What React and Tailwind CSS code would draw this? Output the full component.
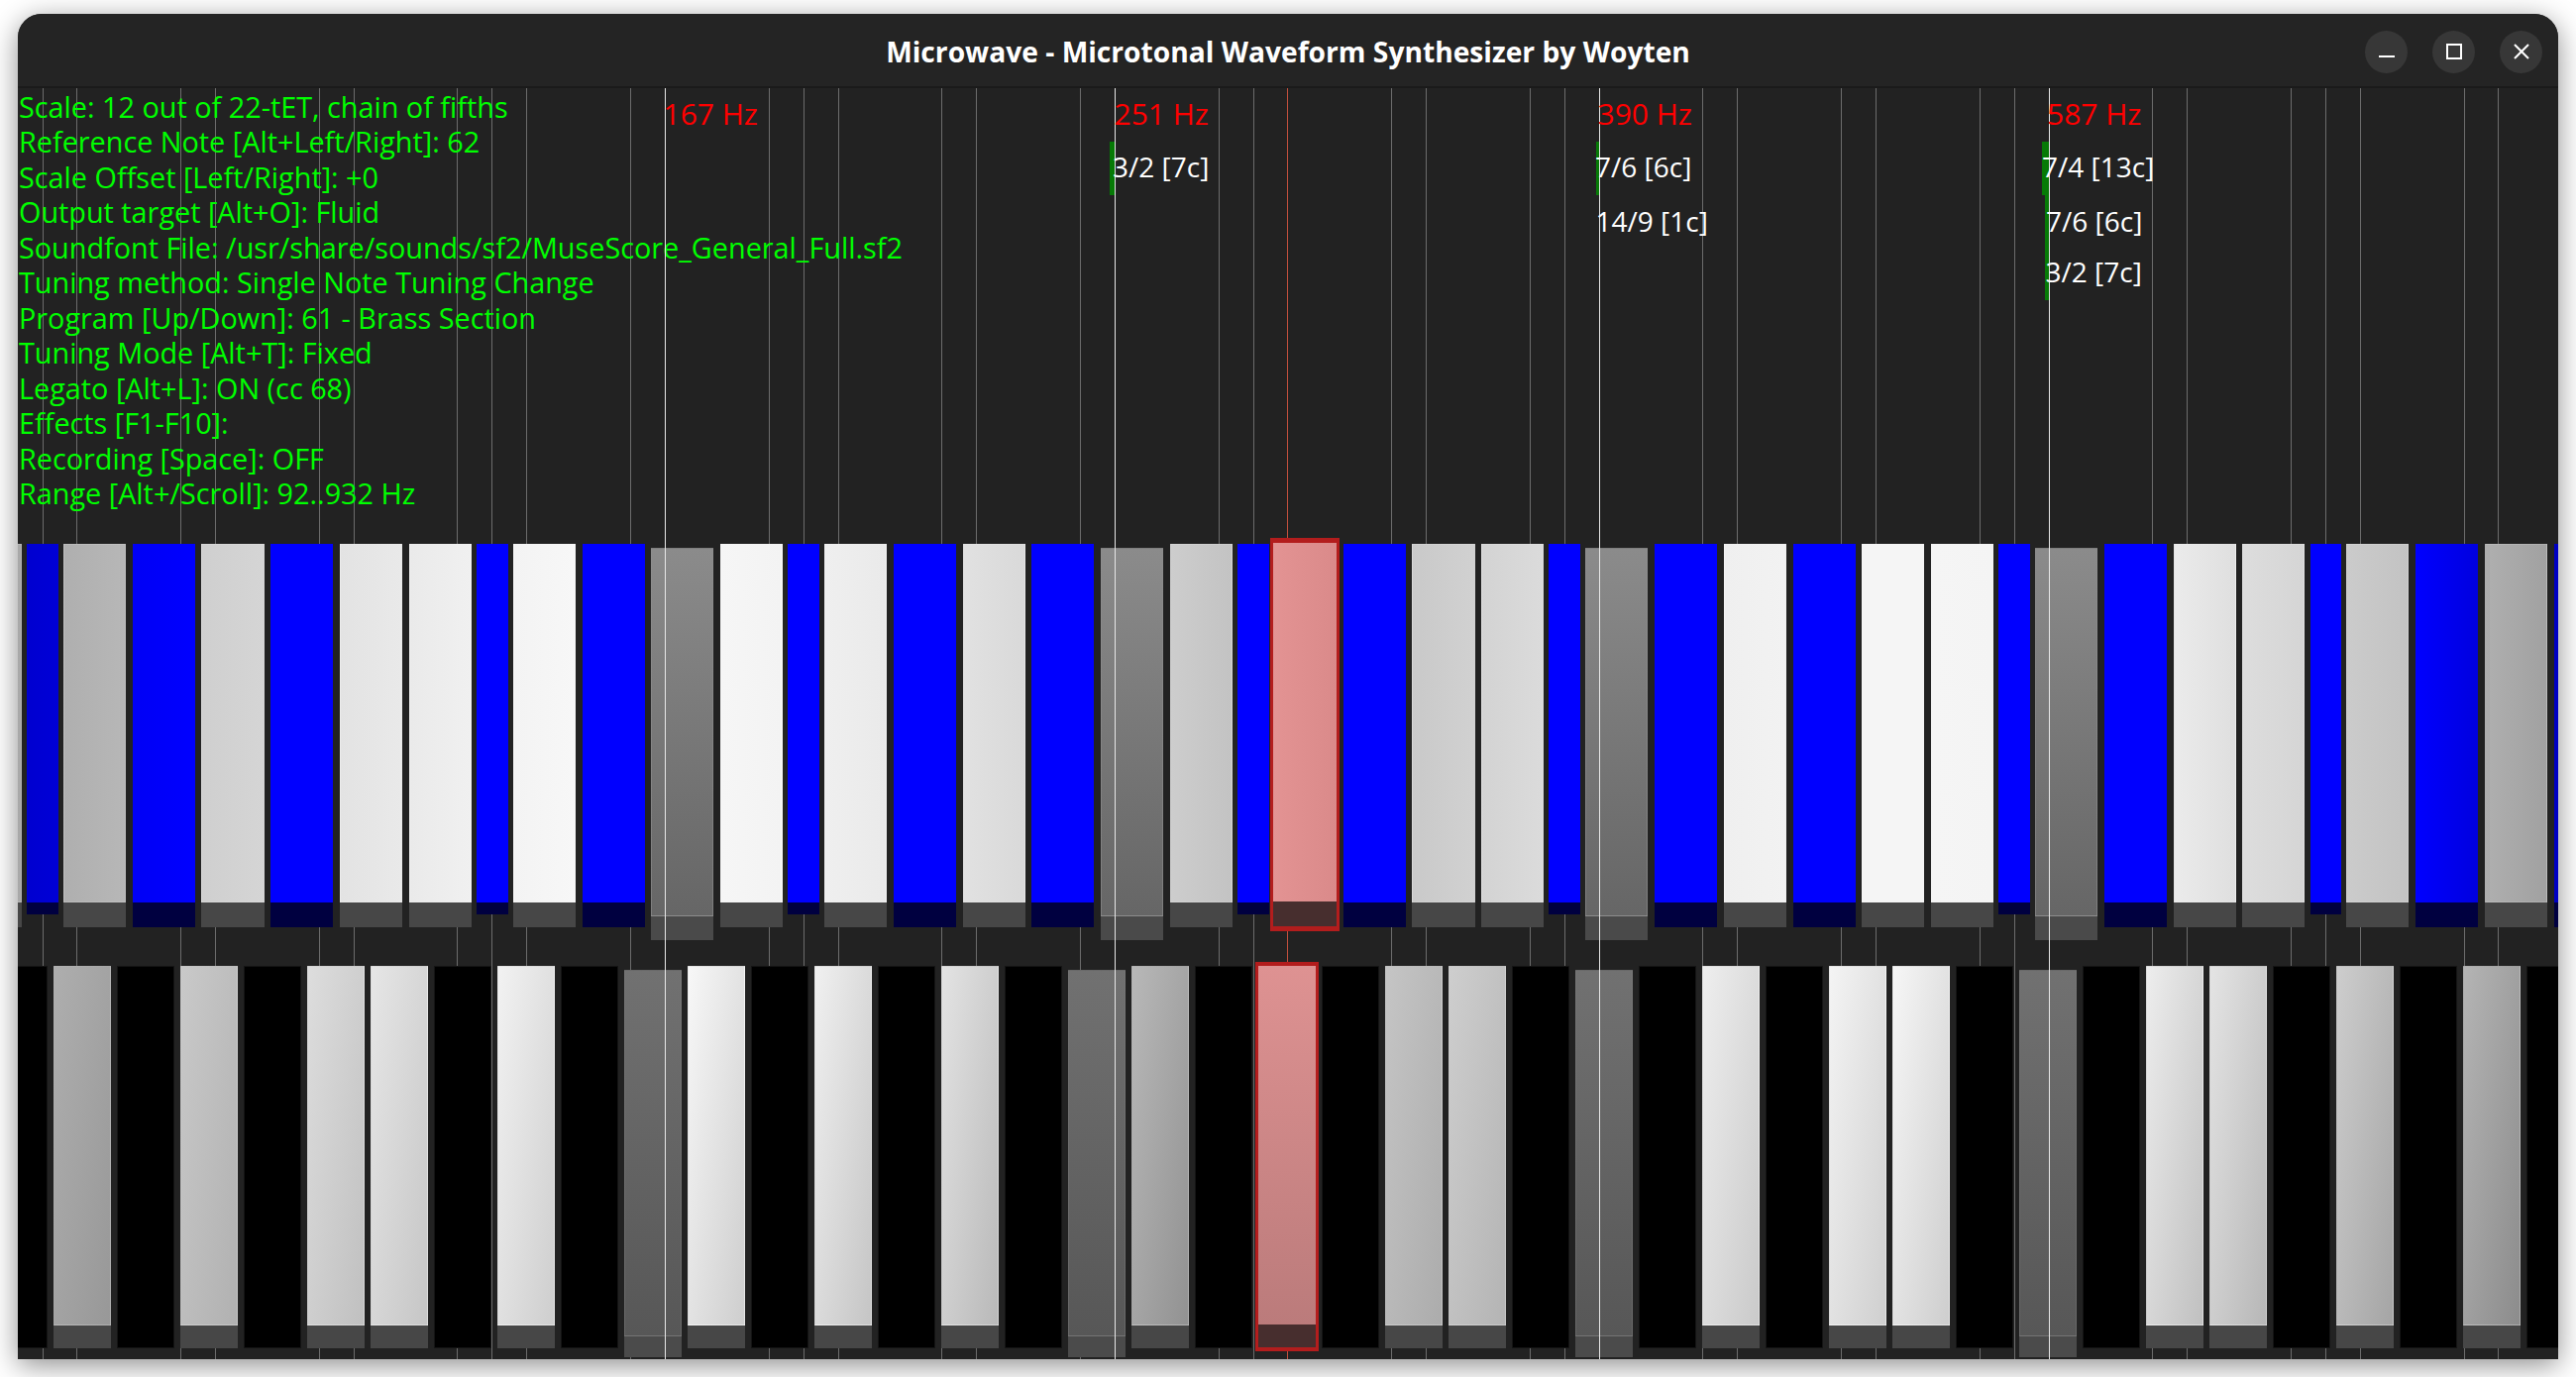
import React from "react";

// geometry of the tuning canvas, in px
const STEP = 34.915; // one step of 22-tET
const ORIGIN = 25; // x of step 0 inside the canvas
const PITCH = 64.01; // lower keyboard: 12 keys per 22 steps

// grey level of the keys along the keyboard (step -> value)
const CURVE = [
  [-4, 156], [0, 172], [2.5, 184], [4.5, 206], [6.5, 214], [8.5, 226], [10.5, 234],
  [12.5, 240], [15.5, 247], [18, 248], [21, 244], [25, 232], [29, 214], [32.5, 206],
  [34.5, 194], [36.5, 188], [39.5, 200], [41.5, 210], [43.5, 220], [48, 238], [53, 246],
  [57, 244], [61.5, 236], [63.5, 222], [65.5, 212], [66.5, 204], [68.5, 194], [70.5, 176],
  [72.5, 160], [76, 148],
];

function level(k) {
  for (let i = 1; i < CURVE.length; i++) {
    const [k0, v0] = CURVE[i - 1];
    const [k1, v1] = CURVE[i];
    if (k <= k1) return Math.round(v0 + ((v1 - v0) * (k - k0)) / (k1 - k0));
  }
  return CURVE[CURVE.length - 1][1];
}

const grey = (v) => `rgb(${v},${v},${v})`;
const blue = (v) => `rgb(0,0,${Math.max(195, Math.min(255, Math.round(255 - (190 - v) * 2.5)))})`;

const INFO = [
  "Scale: 12 out of 22-tET, chain of fifths",
  "Reference Note [Alt+Left/Right]: 62",
  "Scale Offset [Left/Right]: +0",
  "Output target [Alt+O]: Fluid",
  "Soundfont File: /usr/share/sounds/sf2/MuseScore_General_Full.sf2",
  "Tuning method: Single Note Tuning Change",
  "Program [Up/Down]: 61 - Brass Section",
  "Tuning Mode [Alt+T]: Fixed",
  "Legato [Alt+L]: ON (cc 68)",
  "Effects [F1-F10]:",
  "Recording [Space]: OFF",
  "Range [Alt+/Scroll]: 92..932 Hz",
];

const UPPER_SPEC =
  "L2 B1 L2 B2 L2 B2 L2 L2 B1 L2 B2 D2 L2 B1 L2 B2 L2 B2 D2 L2 B1 R2 B2 L2 L2 B1 D2 B2 L2 B2 L2 L2 B1 D2 B2 L2 L2 B1 L2 B2 L2 B2";
const LOWER_SPEC =
  "K L K L K L L K L K D L K L K L K D L K R K L L K D K L K L L K D K L L K L K L K";

let cursor = -2.5;
const upperKeys = UPPER_SPEC.split(" ").map((t) => {
  const key = { kind: t[0], span: Number(t[1]), at: cursor };
  cursor += key.span;
  return key;
});

// the key just below the pressed one is shaded darker on screen
const LOWER_TONES = { 18: [184, 146] };

const lowerKeys = LOWER_SPEC.split(" ").map((kind, i) => ({
  kind,
  center: 36 + ((i - 20) * 22) / 12,
  tone: LOWER_TONES[i],
}));

const NOTES = [0, 1, 4, 5, 8, 9, 12, 13, 14, 17, 18, 21];
const MARKED = [18, 31, 45, 58];
const PRESSED = 36;
const gridSteps = [0, 1, 2, 3]
  .flatMap((p) => NOTES.map((n) => n + p * 22))
  .filter((k) => k <= 73 && !MARKED.includes(k) && k !== PRESSED);

const xOf = (k) => ORIGIN + STEP * k;

const HZ = [
  { text: "167 Hz", left: 651.5 },
  { text: "251 Hz", left: 1106.5 },
  { text: "390 Hz", left: 1594.5 },
  { text: "587 Hz", left: 2048 },
];

const RATIOS = [
  { text: "3/2 [7c]", left: 1105, top: 64.5 },
  { text: "7/6 [6c]", left: 1592, top: 64.5 },
  { text: "14/9 [1c]", left: 1592.5, top: 119.5 },
  { text: "7/4 [13c]", left: 2043, top: 64.5 },
  { text: "7/6 [6c]", left: 2047, top: 119.5 },
  { text: "3/2 [7c]", left: 2046.5, top: 170.5 },
];

// deviation bars, drawn left of the marker line
const BARS = [
  { left: 1102.4, top: 53.7, width: 5, height: 54 },
  { left: 1593.2, top: 53.7, width: 3, height: 54 },
  { left: 2042.5, top: 53.7, width: 7.6, height: 54 },
  { left: 2045.7, top: 107.7, width: 4.4, height: 106 },
];

function UpperKey({ kind, span, at }) {
  if (kind === "R") {
    return (
      <div className="w-[69.83px] shrink-0 border-x-[3.4px] border-y-[5px] border-[#b31d1d]">
        <div className="h-[362px] bg-linear-to-r from-[#e39393] to-[#da8a8a]" />
        <div className="h-[25px] bg-[#472e2e]" />
      </div>
    );
  }
  if (kind === "D") {
    return (
      <div className="w-[69.83px] shrink-0 px-[3.4px] pt-[10.3px]">
        <div className="h-[371.7px] bg-linear-to-b from-[#8b8b8b] to-[#666666] border border-[#8f8f8f]/60" />
        <div className="h-[24.3px] bg-[#4a4a4a]" />
      </div>
    );
  }
  const l = level(at + 0.15);
  const r = level(at + span - 0.15);
  const fill =
    kind === "B"
      ? `linear-gradient(to right, ${blue(l)}, ${blue(r)})`
      : `linear-gradient(to right, ${grey(l)}, ${grey(r)})`;
  const narrow = span === 1;
  return (
    <div className={narrow ? "w-[34.915px] shrink-0 px-[1.7px] pt-[5.7px]" : "w-[69.83px] shrink-0 px-[3.4px] pt-[5.7px]"}>
      <div className={kind === "B" ? "h-[362.3px]" : "h-[362.3px] border border-white/15"} style={{ background: fill }} />
      <div
        className={
          kind === "B"
            ? narrow
              ? "h-[12.3px] bg-[#000040]"
              : "h-[24.7px] bg-[#000040]"
            : "h-[24.7px] bg-[#474747]"
        }
      />
    </div>
  );
}

function LowerKey({ kind, center, tone }) {
  if (kind === "R") {
    return (
      <div className="w-[64.01px] shrink-0 border-x-[3.25px] border-y-[4.3px] border-[#b31d1d]">
        <div className="h-[362.7px] bg-linear-to-b from-[#de9292] to-[#bb7b7b]" />
        <div className="h-[23px] bg-[#472e2e]" />
      </div>
    );
  }
  if (kind === "K") {
    return (
      <div className="w-[64.01px] shrink-0 px-[3.25px] pt-[4.3px]">
        <div className="h-[385.7px] bg-black border border-[#141414]" />
      </div>
    );
  }
  if (kind === "D") {
    return (
      <div className="w-[64.01px] shrink-0 px-[3.25px] pt-[8.3px]">
        <div className="h-[370px] bg-linear-to-b from-[#717171] to-[#575757] border border-[#7a7a7a]/50" />
        <div className="h-[21px] bg-[#4b4b4b]" />
      </div>
    );
  }
  const [l, r] = tone || [level(center - 0.8), Math.round(level(center + 0.8) * 0.84)];
  return (
    <div className="w-[64.01px] shrink-0 px-[3.25px] pt-[4.3px]">
      <div
        className="h-[362.7px] border border-white/15"
        style={{ background: `linear-gradient(to bottom right, ${grey(l)}, ${grey(r)})` }}
      />
      <div className="h-[23px] bg-[#474747]" />
    </div>
  );
}

function WindowButton({ children }) {
  return (
    <div className="w-[43px] h-[43px] rounded-full bg-[#373737] flex items-center justify-center">
      {children}
    </div>
  );
}

function TitleBar() {
  return (
    <div className="h-[73px] grid grid-cols-[1fr_auto_1fr] items-center bg-[#242424] pt-[3px]">
      <div />
      <div className="text-white font-bold text-[28.2px] leading-none whitespace-pre font-['Open_Sans','Noto_Sans',sans-serif]">
        Microwave - Microtonal Waveform Synthesizer by Woyten
      </div>
      <div className="flex justify-end gap-[25px] pr-[16px]">
        <WindowButton>
          <svg width="16" height="16" viewBox="0 0 16 16">
            <rect x="0" y="12" width="16" height="2" fill="#ffffff" />
          </svg>
        </WindowButton>
        <WindowButton>
          <svg width="16" height="16" viewBox="0 0 16 16">
            <rect x="1" y="1" width="14" height="14" fill="none" stroke="#ffffff" strokeWidth="2" />
          </svg>
        </WindowButton>
        <WindowButton>
          <svg width="16" height="16" viewBox="0 0 16 16">
            <path d="M1 1 L15 15 M15 1 L1 15" stroke="#ffffff" strokeWidth="2" />
          </svg>
        </WindowButton>
      </div>
    </div>
  );
}

export default function App() {
  return (
    <div className="w-[2600px] h-[1390px] bg-white pt-[14px] pl-[18px] overflow-hidden">
      <div className="w-[2564px] h-[1358px] flex flex-col rounded-t-[24px] overflow-hidden bg-[#222222] shadow-[0_6px_28px_rgba(0,0,0,0.45)]">
        <TitleBar />
        <div className="h-[2px] bg-[#1a1a1a]" />

        <div className="relative flex-1 overflow-hidden bg-[#222222]">
          {/* pitch grid */}
          <div className="absolute inset-0">
            {gridSteps.map((k) => (
              <div key={k} className="absolute top-0 bottom-0 w-px bg-[#6c6c6c]" style={{ left: xOf(k) - 0.5 }} />
            ))}
            <div className="absolute top-0 bottom-0 w-px bg-[#c4503e]" style={{ left: xOf(PRESSED) - 0.5 }} />
          </div>

          <div className="relative z-10 h-[454px] pl-[1px] pt-[1px] text-[#00ff00] text-[28.8px] leading-[35.45px] font-['Open_Sans','Noto_Sans',sans-serif]">
            {INFO.map((line) => (
              <div key={line} className="whitespace-pre">
                {line}
              </div>
            ))}
          </div>

          <div className="relative z-10 flex items-start w-max h-[427.7px] ml-[-62.3px]">
            {upperKeys.map((key, i) => (
              <UpperKey key={i} {...key} />
            ))}
          </div>

          <div className="relative z-10 flex items-start w-max ml-[-30.8px]">
            {lowerKeys.map((key, i) => (
              <LowerKey key={i} {...key} />
            ))}
          </div>

          {/* marker lines, frequencies and ratios */}
          <div className="absolute inset-0 z-20 pointer-events-none font-['Open_Sans','Noto_Sans',sans-serif]">
            {MARKED.map((k) => (
              <div key={k} className="absolute top-0 bottom-0 w-px bg-[#e6e6e6]" style={{ left: xOf(k) - 0.5 }} />
            ))}
            {BARS.map((b, i) => (
              <div key={i} className="absolute bg-[#067a06]" style={{ left: b.left, top: b.top, width: b.width, height: b.height }} />
            ))}
            {HZ.map((h) => (
              <div key={h.text} className="absolute top-[10.8px] text-[30px] leading-none text-[#ff0000] whitespace-pre" style={{ left: h.left }}>
                {h.text}
              </div>
            ))}
            {RATIOS.map((r, i) => (
              <div key={i} className="absolute text-[28px] leading-none text-white whitespace-pre" style={{ left: r.left, top: r.top }}>
                {r.text}
              </div>
            ))}
          </div>
        </div>
      </div>
    </div>
  );
}
